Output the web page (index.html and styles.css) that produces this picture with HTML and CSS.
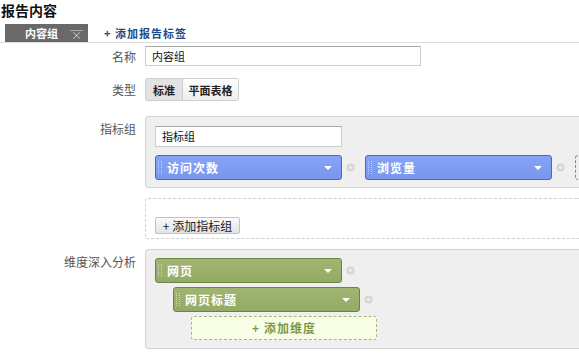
FILE: index.html
```html
<!DOCTYPE html>
<html lang="zh-CN">
<head>
<meta charset="utf-8">
<title>报告内容</title>
<link rel="stylesheet" href="styles.css">
</head>
<body>
<h1 class="title">报告内容</h1>
<div class="tabbar">
  <div class="tab"><span class="tab-name">内容组</span><span class="tab-close">×</span></div>
  <a class="add-tab">+ 添加报告标签</a>
</div>
<div class="form">
  <div class="row row-name">
    <div class="label">名称</div>
    <div class="input wide">内容组</div>
  </div>
  <div class="row row-type">
    <div class="label">类型</div>
    <div class="btn-group">
      <span class="seg active">标准</span><span class="seg">平面表格</span>
    </div>
  </div>
  <div class="row row-metrics">
    <div class="label label-box">指标组</div>
    <div class="box metrics-box">
      <div class="input narrow">指标组</div>
      <div class="chip-row">
        <div class="chip blue"><span class="grip"></span><span class="chip-text">访问次数</span><span class="arrow"></span></div>
        <span class="remove"><svg width="9" height="9" viewBox="0 0 9 9"><circle cx="4.5" cy="4.5" r="4" fill="#d4d4d4"/><circle cx="4.5" cy="4.5" r="2" fill="#e9e9e9"/></svg></span>
        <div class="chip blue chip2"><span class="grip"></span><span class="chip-text">浏览量</span><span class="arrow"></span></div>
        <span class="remove"><svg width="9" height="9" viewBox="0 0 9 9"><circle cx="4.5" cy="4.5" r="4" fill="#d4d4d4"/><circle cx="4.5" cy="4.5" r="2" fill="#e9e9e9"/></svg></span>
        <div class="drop-target"></div>
      </div>
    </div>
  </div>
  <div class="row row-addgroup">
    <div class="label"></div>
    <div class="dashed-box">
      <span class="add-btn">+ 添加指标组</span>
    </div>
  </div>
  <div class="row row-dims">
    <div class="label label-box">维度深入分析</div>
    <div class="box dims-box">
      <div class="dim-line">
        <div class="chip green"><span class="grip"></span><span class="chip-text">网页</span><span class="arrow"></span></div>
        <span class="remove"><svg width="9" height="9" viewBox="0 0 9 9"><circle cx="4.5" cy="4.5" r="4" fill="#d4d4d4"/><circle cx="4.5" cy="4.5" r="2" fill="#e9e9e9"/></svg></span>
      </div>
      <div class="dim-line indent1">
        <div class="chip green"><span class="grip"></span><span class="chip-text">网页标题</span><span class="arrow"></span></div>
        <span class="remove"><svg width="9" height="9" viewBox="0 0 9 9"><circle cx="4.5" cy="4.5" r="4" fill="#d4d4d4"/><circle cx="4.5" cy="4.5" r="2" fill="#e9e9e9"/></svg></span>
      </div>
      <div class="dim-line indent2">
        <div class="add-dim">+ 添加维度</div>
      </div>
    </div>
  </div>
</div>
</body>
</html>
```
FILE: styles.css
```css
html, body {
  margin: 0;
  padding: 0;
  background: #fff;
  overflow: hidden;
}
body {
  font-family: "Noto Sans CJK SC", "Noto Sans", sans-serif;
  color: #333;
  width: 579px;
  height: 354px;
}
.title {
  margin: 0;
  height: 22px;
  padding-left: 1px;
  font-size: 14px;
  line-height: 20px;
  font-weight: bold;
  color: #111;
}
.tabbar {
  display: flex;
  align-items: flex-end;
  height: 20px;
  padding-left: 5px;
  border-bottom: 1px solid #dcdcdc;
}
.tab {
  display: flex;
  align-items: center;
  width: 83px;
  height: 18px;
  background: #696969;
  box-sizing: border-box;
  padding-left: 20px;
}
.tab-name {
  color: #fff;
  font-size: 11px;
  font-weight: bold;
  line-height: 18px;
}
.tab-close {
  margin-left: 12px;
  color: #c8c8c8;
  font-size: 11px;
  line-height: 9px;
  border-top: 1px solid #aaa;
  padding: 0 1px;
  margin-top: 3px;
}
.add-tab {
  margin-left: 16px;
  color: #1d4a88;
  font-size: 11px;
  font-weight: bold;
  line-height: 18px;
  letter-spacing: 1px;
}
.form {
  padding-top: 3px;
}
.row {
  display: flex;
  gap: 9px;
}
.label {
  flex: none;
  width: 136px;
  text-align: right;
  font-size: 12px;
  color: #555;
}
.row-name {
  align-items: center;
  height: 20px;
  margin-bottom: 12px;
}
.input {
  flex: none;
  box-sizing: border-box;
  background: #fff;
  border: 1px solid #cdcdcd;
  border-top-color: #a8a8a8;
  font-size: 11px;
  color: #111;
  padding-left: 6px;
}
.input.wide {
  width: 276px;
  height: 20px;
  line-height: 18px;
}
.row-type {
  align-items: center;
  height: 23px;
  margin-bottom: 15px;
}
.btn-group {
  display: flex;
  height: 23px;
  box-sizing: border-box;
  border: 1px solid #cfcfcf;
  border-radius: 2px;
}
.seg {
  display: flex;
  align-items: center;
  justify-content: center;
  font-size: 11px;
  font-weight: bold;
  color: #222;
  background: linear-gradient(#fdfdfd, #eeeeee);
}
.seg.active {
  width: 36px;
  background: #e2e2e2;
  border-right: 1px solid #cfcfcf;
}
.seg:not(.active) {
  width: 55px;
}
.label-box {
  padding-top: 5px;
  line-height: 16px;
}
.box {
  flex: none;
  width: 434px;
  box-sizing: border-box;
  background: #efefef;
  border: 1px solid #d3d3d3;
  border-right: none;
  border-radius: 4px 0 0 4px;
  overflow: hidden;
}
.metrics-box {
  height: 72px;
  padding: 9px 0 0 9px;
  margin-bottom: 10px;
}
.input.narrow {
  width: 187px;
  height: 21px;
  line-height: 19px;
  font-size: 11px;
  padding-left: 6px;
}
.chip-row {
  display: flex;
  align-items: center;
  margin-top: 8px;
}
.chip {
  flex: none;
  display: flex;
  align-items: center;
  width: 187px;
  height: 25px;
  box-sizing: border-box;
  border-radius: 3px;
  border: 1px solid;
  padding-left: 2px;
  padding-right: 9px;
}
.chip.blue {
  background: linear-gradient(#85a3f6, #7896ef);
  border-color: #4a68c2;
}
.chip.green {
  background: linear-gradient(#9fb571, #94ab66);
  border-color: #6a8442;
}
.grip {
  flex: none;
  width: 2px;
  height: 13px;
  border-left: 1px dotted rgba(255, 255, 255, 0.55);
  border-right: 1px dotted rgba(255, 255, 255, 0.55);
  margin-right: 5px;
}
.chip-text {
  flex: 1;
  color: #fff;
  font-size: 12px;
  font-weight: bold;
  letter-spacing: 1px;
  line-height: 23px;
}
.arrow {
  flex: none;
  width: 0;
  height: 0;
  border-left: 4px solid transparent;
  border-right: 4px solid transparent;
  border-top: 4px solid #fff;
}
.remove {
  flex: none;
  display: flex;
  width: 9px;
  height: 9px;
  margin-left: 4px;
}
.chip2 {
  margin-left: 10px;
}
.drop-target {
  flex: none;
  width: 3px;
  height: 25px;
  box-sizing: border-box;
  margin-left: 10px;
  border: 1px dashed #6f86c8;
  border-right: none;
  border-radius: 3px 0 0 3px;
}
.dashed-box {
  flex: none;
  width: 434px;
  height: 41px;
  box-sizing: border-box;
  border: 1px dashed #cfcfcf;
  border-right: none;
  border-radius: 3px 0 0 3px;
  padding: 13px 0 0 9px;
  margin-bottom: 10px;
}
.add-btn {
  display: inline-flex;
  align-items: center;
  justify-content: center;
  width: 85px;
  height: 17px;
  box-sizing: border-box;
  border: 1px solid #c2c2c2;
  border-radius: 2px;
  background: linear-gradient(#fafafa, #e4e4e4);
  font-size: 12px;
  color: #222;
}
.dims-box {
  height: 100px;
  padding: 8px 0 0 9px;
}
.dim-line {
  display: flex;
  align-items: center;
  margin-bottom: 4px;
}
.indent1 {
  padding-left: 18px;
}
.indent2 {
  padding-left: 36px;
}
.add-dim {
  flex: none;
  width: 186px;
  height: 24px;
  box-sizing: border-box;
  border: 1px dashed #a9b67f;
  border-radius: 3px;
  background: #f8fde6;
  color: #7c9a4a;
  font-size: 12px;
  font-weight: bold;
  text-align: center;
  line-height: 22px;
  letter-spacing: 1px;
}
```
